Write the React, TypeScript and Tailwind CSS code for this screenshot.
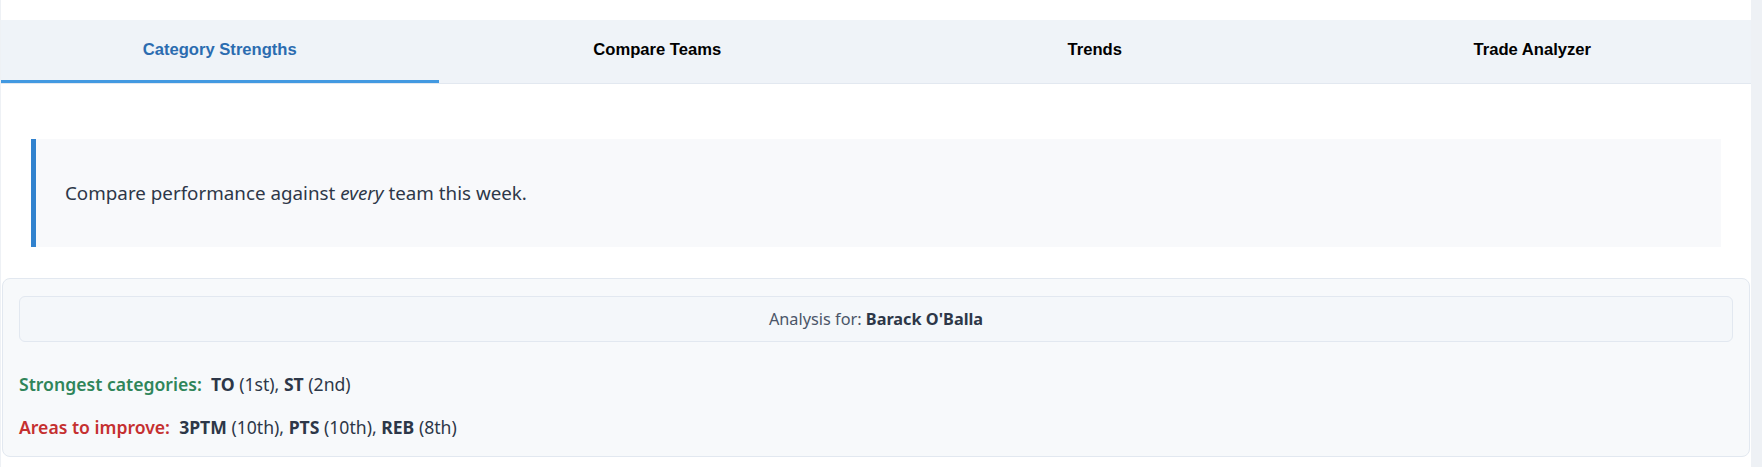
const tabs = ['Category Strengths', 'Compare Teams', 'Trends', 'Trade Analyzer'];

const body = { fontFamily: '"Noto Sans", "Open Sans", sans-serif' };

export default function App() {
  const active = 0;

  return (
    <div className="flex h-[467px] bg-[#eef1f5]">
      <div className="ml-px w-[1750px] bg-white pt-5">
        <nav
          className="grid grid-cols-4 border-b border-[#e2e8f0] bg-[#eff3f8]"
          style={{ fontFamily: '"Liberation Sans", Arial, sans-serif' }}
        >
          {tabs.map((label, i) => (
            <button
              key={label}
              type="button"
              className={
                i === active
                  ? 'flex h-[63px] items-center justify-center border-b-[3px] border-[#4299e1] text-[16.6px] font-bold text-[#2b6cb0]'
                  : 'flex h-[63px] items-center justify-center border-b-[3px] border-transparent text-[16.6px] font-bold text-black'
              }
            >
              {label}
            </button>
          ))}
        </nav>

        <div style={body}>
          <div className="px-[30px] pt-[55px]">
            <div className="flex h-[108px] items-center border-l-[5px] border-[#3182ce] bg-[#f8f9fb] pl-[29px] pt-px text-[18.8px] text-[#2d3748]">
              <p>
                Compare performance against <em>every</em> team this week.
              </p>
            </div>
          </div>

          <div className="mx-px mt-[31px] rounded-lg border border-[#e2e8f0] bg-[#f7f9fb] px-4 pt-[17px] pb-[17px]">
            <div className="flex h-[46px] items-center justify-center rounded-md border border-[#e2e8f0] bg-[#f4f7fa] text-[16.3px] text-[#4a5568]">
              <span>
                Analysis for: <strong className="font-bold text-[#2d3748]">Barack O'Balla</strong>
              </span>
            </div>

            <div className="mt-[30px] text-[17.6px] leading-6 text-[#2d3748]">
              <p>
                <span className="font-semibold text-[#2f855a]">Strongest categories:</span>
                {'\u00a0 '}
                <strong className="font-bold">TO</strong> (1st), <strong className="font-bold">ST</strong> (2nd)
              </p>
              <p className="mt-[19px]">
                <span className="font-semibold text-[#c53030]">Areas to improve:</span>
                {'\u00a0 '}
                <strong className="font-bold">3PTM</strong> (10th), <strong className="font-bold">PTS</strong> (10th),{' '}
                <strong className="font-bold">REB</strong> (8th)
              </p>
            </div>
          </div>
        </div>
      </div>
    </div>
  );
}
